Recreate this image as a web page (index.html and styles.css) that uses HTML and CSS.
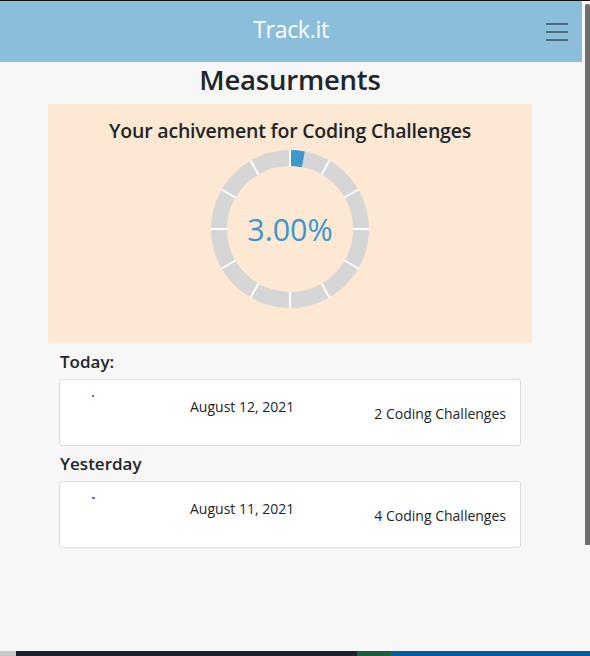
FILE: index.html
```html
<!DOCTYPE html>
<html lang="en">
<head>
<meta charset="utf-8">
<title>Track.it</title>
<link rel="stylesheet" href="styles.css">
</head>
<body>
<div class="screen">
  <div class="topline"></div>
  <div class="window">
    <div class="page">
      <header class="navbar">
        <span class="brand">Track.it</span>
        <button class="menu" aria-label="menu">
          <span></span><span></span><span></span>
        </button>
      </header>
      <main class="content">
        <h1 class="title">Measurments</h1>
        <section class="achievement">
          <h2 class="ach-title">Your achivement for Coding Challenges</h2>
          <div class="donut">
            <svg width="160" height="160" viewBox="0 0 160 160">
              <circle cx="80" cy="80" r="71" fill="none" stroke="#d6d6d6" stroke-width="16"/>
              <path d="M80 9 A71 71 0 0 1 93.3 10.3" fill="none" stroke="#3d98cd" stroke-width="16"/>
              <g stroke="#ffffff" stroke-width="2">
                <line x1="80" y1="1" x2="80" y2="17"/>
                <line x1="80" y1="1" x2="80" y2="17" transform="rotate(30 80 80)"/>
                <line x1="80" y1="1" x2="80" y2="17" transform="rotate(60 80 80)"/>
                <line x1="80" y1="1" x2="80" y2="17" transform="rotate(90 80 80)"/>
                <line x1="80" y1="1" x2="80" y2="17" transform="rotate(120 80 80)"/>
                <line x1="80" y1="1" x2="80" y2="17" transform="rotate(150 80 80)"/>
                <line x1="80" y1="1" x2="80" y2="17" transform="rotate(180 80 80)"/>
                <line x1="80" y1="1" x2="80" y2="17" transform="rotate(210 80 80)"/>
                <line x1="80" y1="1" x2="80" y2="17" transform="rotate(240 80 80)"/>
                <line x1="80" y1="1" x2="80" y2="17" transform="rotate(270 80 80)"/>
                <line x1="80" y1="1" x2="80" y2="17" transform="rotate(300 80 80)"/>
                <line x1="80" y1="1" x2="80" y2="17" transform="rotate(330 80 80)"/>
              </g>
            </svg>
            <span class="pct">3.00%</span>
          </div>
        </section>
        <section class="days">
          <h3 class="day-label">Today:</h3>
          <div class="card">
            <span class="dot"></span>
            <span class="date">August 12, 2021</span>
            <span class="count">2 Coding Challenges</span>
          </div>
          <h3 class="day-label">Yesterday</h3>
          <div class="card">
            <span class="dot dot-wide"></span>
            <span class="date">August 11, 2021</span>
            <span class="count">4 Coding Challenges</span>
          </div>
        </section>
      </main>
    </div>
    <div class="scrolltrack"><div class="thumb"></div></div>
  </div>
  <div class="taskbar">
    <span class="tb-a"></span><span class="tb-b"></span><span class="tb-c"></span><span class="tb-d"></span>
  </div>
</div>
</body>
</html>
```
FILE: styles.css
```css
* { box-sizing: border-box; }
html, body { margin: 0; padding: 0; }
body {
  width: 590px;
  height: 656px;
  overflow: hidden;
  background: #f7f7f7;
  font-family: "Open Sans", "Noto Sans", sans-serif;
  color: #212529;
}
.screen { display: flex; flex-direction: column; height: 656px; }
.topline { height: 1px; background: #111; flex: none; }
.window { display: flex; flex: 1; min-height: 0; }
.page { width: 582px; flex: none; background: #f7f7f7; }
.navbar {
  height: 61px;
  background: #8abedb;
  display: flex;
  align-items: center;
  justify-content: center;
  position: relative;
}
.brand {
  color: #ffffff;
  font-size: 23px;
  margin-top: -6px;
  letter-spacing: -0.3px;
}
.menu {
  position: absolute;
  right: 14px;
  top: 22px;
  width: 22px;
  height: 18px;
  border: 0;
  padding: 0;
  background: transparent;
  display: flex;
  flex-direction: column;
  justify-content: space-between;
}
.menu span { display: block; height: 2px; background: #4f6a7d; }
.content {
  display: flex;
  flex-direction: column;
  align-items: center;
  padding-right: 2px;
}
.title {
  margin: 0;
  font-size: 27.5px;
  font-weight: 600;
  line-height: 36px;
  letter-spacing: -0.2px;
}
.achievement {
  margin-top: 6px;
  width: 484px;
  height: 239px;
  background: #fde9d3;
  display: flex;
  flex-direction: column;
  align-items: center;
}
.ach-title {
  margin: 15px 0 0;
  font-size: 19.5px;
  font-weight: 600;
  line-height: 24px;
  letter-spacing: -0.2px;
}
.donut {
  position: relative;
  width: 160px;
  height: 160px;
  margin-top: 6px;
}
.donut svg { display: block; }
.pct {
  position: absolute;
  inset: 0;
  display: flex;
  align-items: center;
  justify-content: center;
  color: #3d96cc;
  font-size: 30.5px;
}
.days { width: 484px; padding: 0 11px; }
.day-label {
  margin: 6px 0 0;
  padding-left: 1px;
  font-size: 17px;
  font-weight: 600;
  line-height: 26px;
}
.card + .day-label { margin-top: 5px; }
.card {
  margin-top: 4px;
  height: 67px;
  background: #ffffff;
  border: 1px solid #dcdcdc;
  border-radius: 3px;
  position: relative;
  display: grid;
  grid-template-columns: 130px 1fr auto;
  padding: 0 14px 0 0;
}
.dot {
  position: absolute;
  left: 32px;
  top: 15px;
  width: 2px;
  height: 2px;
  background: #6469cc;
}
.dot-wide { width: 3px; }
.date {
  grid-column: 2;
  font-size: 14px;
  margin-top: 17px;
  line-height: 20px;
}
.count {
  grid-column: 3;
  font-size: 14px;
  margin-top: 24px;
  line-height: 20px;
}
.scrolltrack { flex: 1; background: #f7f7f7; padding: 3px 0 0 3px; }
.thumb { width: 5px; height: 541px; background: #6e6e6e; border-radius: 2px 2px 0 0; }
.taskbar { height: 5px; flex: none; display: flex; }
.tb-a { width: 16px; background: #c8c8c8; }
.tb-b { width: 341px; background: #1e222c; }
.tb-c { width: 34px; background: #195e3e; }
.tb-d { flex: 1; background: #065c9f; }
```
